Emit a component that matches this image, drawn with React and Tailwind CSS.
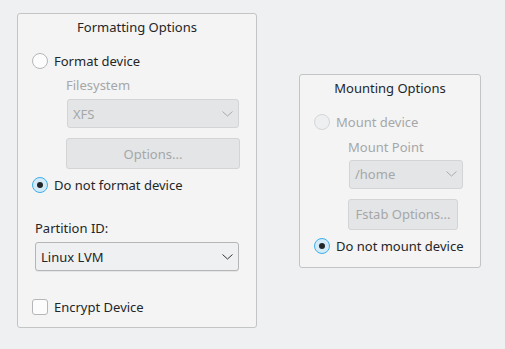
import React from 'react'

const font = { fontFamily: '"Noto Sans", "Open Sans", sans-serif' }

const Chevron = ({ disabled }) => (
  <svg width="11" height="6" viewBox="0 0 11 6" className="shrink-0">
    <path d="M0.5 0.5 L5.5 5 L10.5 0.5" fill="none" stroke={disabled ? '#a9abad' : '#31363b'} strokeWidth="1" />
  </svg>
)

const Radio = ({ checked, disabled }) => {
  if (checked) {
    return (
      <span className="size-[16px] shrink-0 rounded-full border border-[#3daee9] bg-[#d3ebf8] flex items-center justify-center">
        <span className="size-[6px] rounded-full bg-[#232629]" />
      </span>
    )
  }
  return (
    <span
      className={`size-[16px] shrink-0 rounded-full border ${disabled ? 'border-[#d4d5d6] bg-[#eeeff0]' : 'border-[#b4b6b8] bg-[#fcfcfc]'}`}
    />
  )
}

const Combo = ({ value, disabled, className }) => (
  <div
    className={`h-[29px] rounded-[3px] border flex items-center justify-between pl-[5px] pr-[5px] ${
      disabled ? 'border-[#d3d4d5] bg-[#e4e5e6] text-[#a5a7a9]' : 'border-[#b3b5b7] bg-[#eff0f1] text-[#232629] shadow-[0_1px_0_rgba(0,0,0,0.06)]'
    } ${className}`}
  >
    <span>{value}</span>
    <Chevron disabled={disabled} />
  </div>
)

const Button = ({ label, className }) => (
  <div className={`h-[31px] rounded-[3px] border border-[#d3d4d5] bg-[#e4e5e6] text-[#a5a7a9] flex items-center justify-center ${className}`}>
    {label}
  </div>
)

export default function App() {
  return (
    <div style={font} className="w-[505px] h-[349px] bg-[#eff0f1] text-[13px] leading-[18px] text-[#232629] flex items-center gap-[42px] pl-[17px] pt-[13px] pb-[21px]">
      {/* Formatting options */}
      <div className="w-[240px] h-[315px] shrink-0 rounded-[3px] border border-[#c2c4c5] bg-[#f4f4f4] flex flex-col">
        <div className="h-[26px] flex items-center justify-center">Formatting Options</div>
        <div className="mt-[11px] h-[19px] flex items-center gap-[6px] pl-[14px]">
          <Radio />
          <span>Format device</span>
        </div>
        <div className="mt-[6px] h-[18px] pl-[48px] text-[#a5a7a9]">Filesystem</div>
        <Combo value="XFS" disabled className="mt-[5px] ml-[49px] w-[172px]" />
        <Button label="Options..." className="mt-[10px] ml-[48px] w-[174px]" />
        <div className="mt-[7px] h-[18px] flex items-center gap-[6px] pl-[14px]">
          <Radio checked />
          <span>Do not format device</span>
        </div>
        <div className="mt-[25px] h-[18px] pl-[17px]">Partition ID:</div>
        <Combo value="Linux LVM" className="mt-[5px] ml-[17px] w-[204px]" />
        <div className="mt-[27px] h-[18px] flex items-center gap-[6px] pl-[14px]">
          <span className="size-[16px] shrink-0 rounded-[3px] border border-[#b4b6b8] bg-[#fcfcfc]" />
          <span>Encrypt Device</span>
        </div>
      </div>

      {/* Mounting options */}
      <div className="w-[182px] h-[194px] shrink-0 rounded-[3px] border border-[#c2c4c5] bg-[#f4f4f4] flex flex-col">
        <div className="h-[26px] flex items-center justify-center">Mounting Options</div>
        <div className="mt-[12px] h-[19px] flex items-center gap-[6px] pl-[14px] text-[#a5a7a9]">
          <Radio disabled />
          <span>Mount device</span>
        </div>
        <div className="mt-[6px] h-[18px] pl-[48px] text-[#a5a7a9]">Mount Point</div>
        <Combo value="/home" disabled className="mt-[4px] ml-[49px] w-[114px]" />
        <Button label="Fstab Options..." className="mt-[10px] ml-[48px] w-[110px]" />
        <div className="mt-[7px] h-[18px] flex items-center gap-[6px] pl-[14px]">
          <Radio checked />
          <span>Do not mount device</span>
        </div>
      </div>
    </div>
  )
}
